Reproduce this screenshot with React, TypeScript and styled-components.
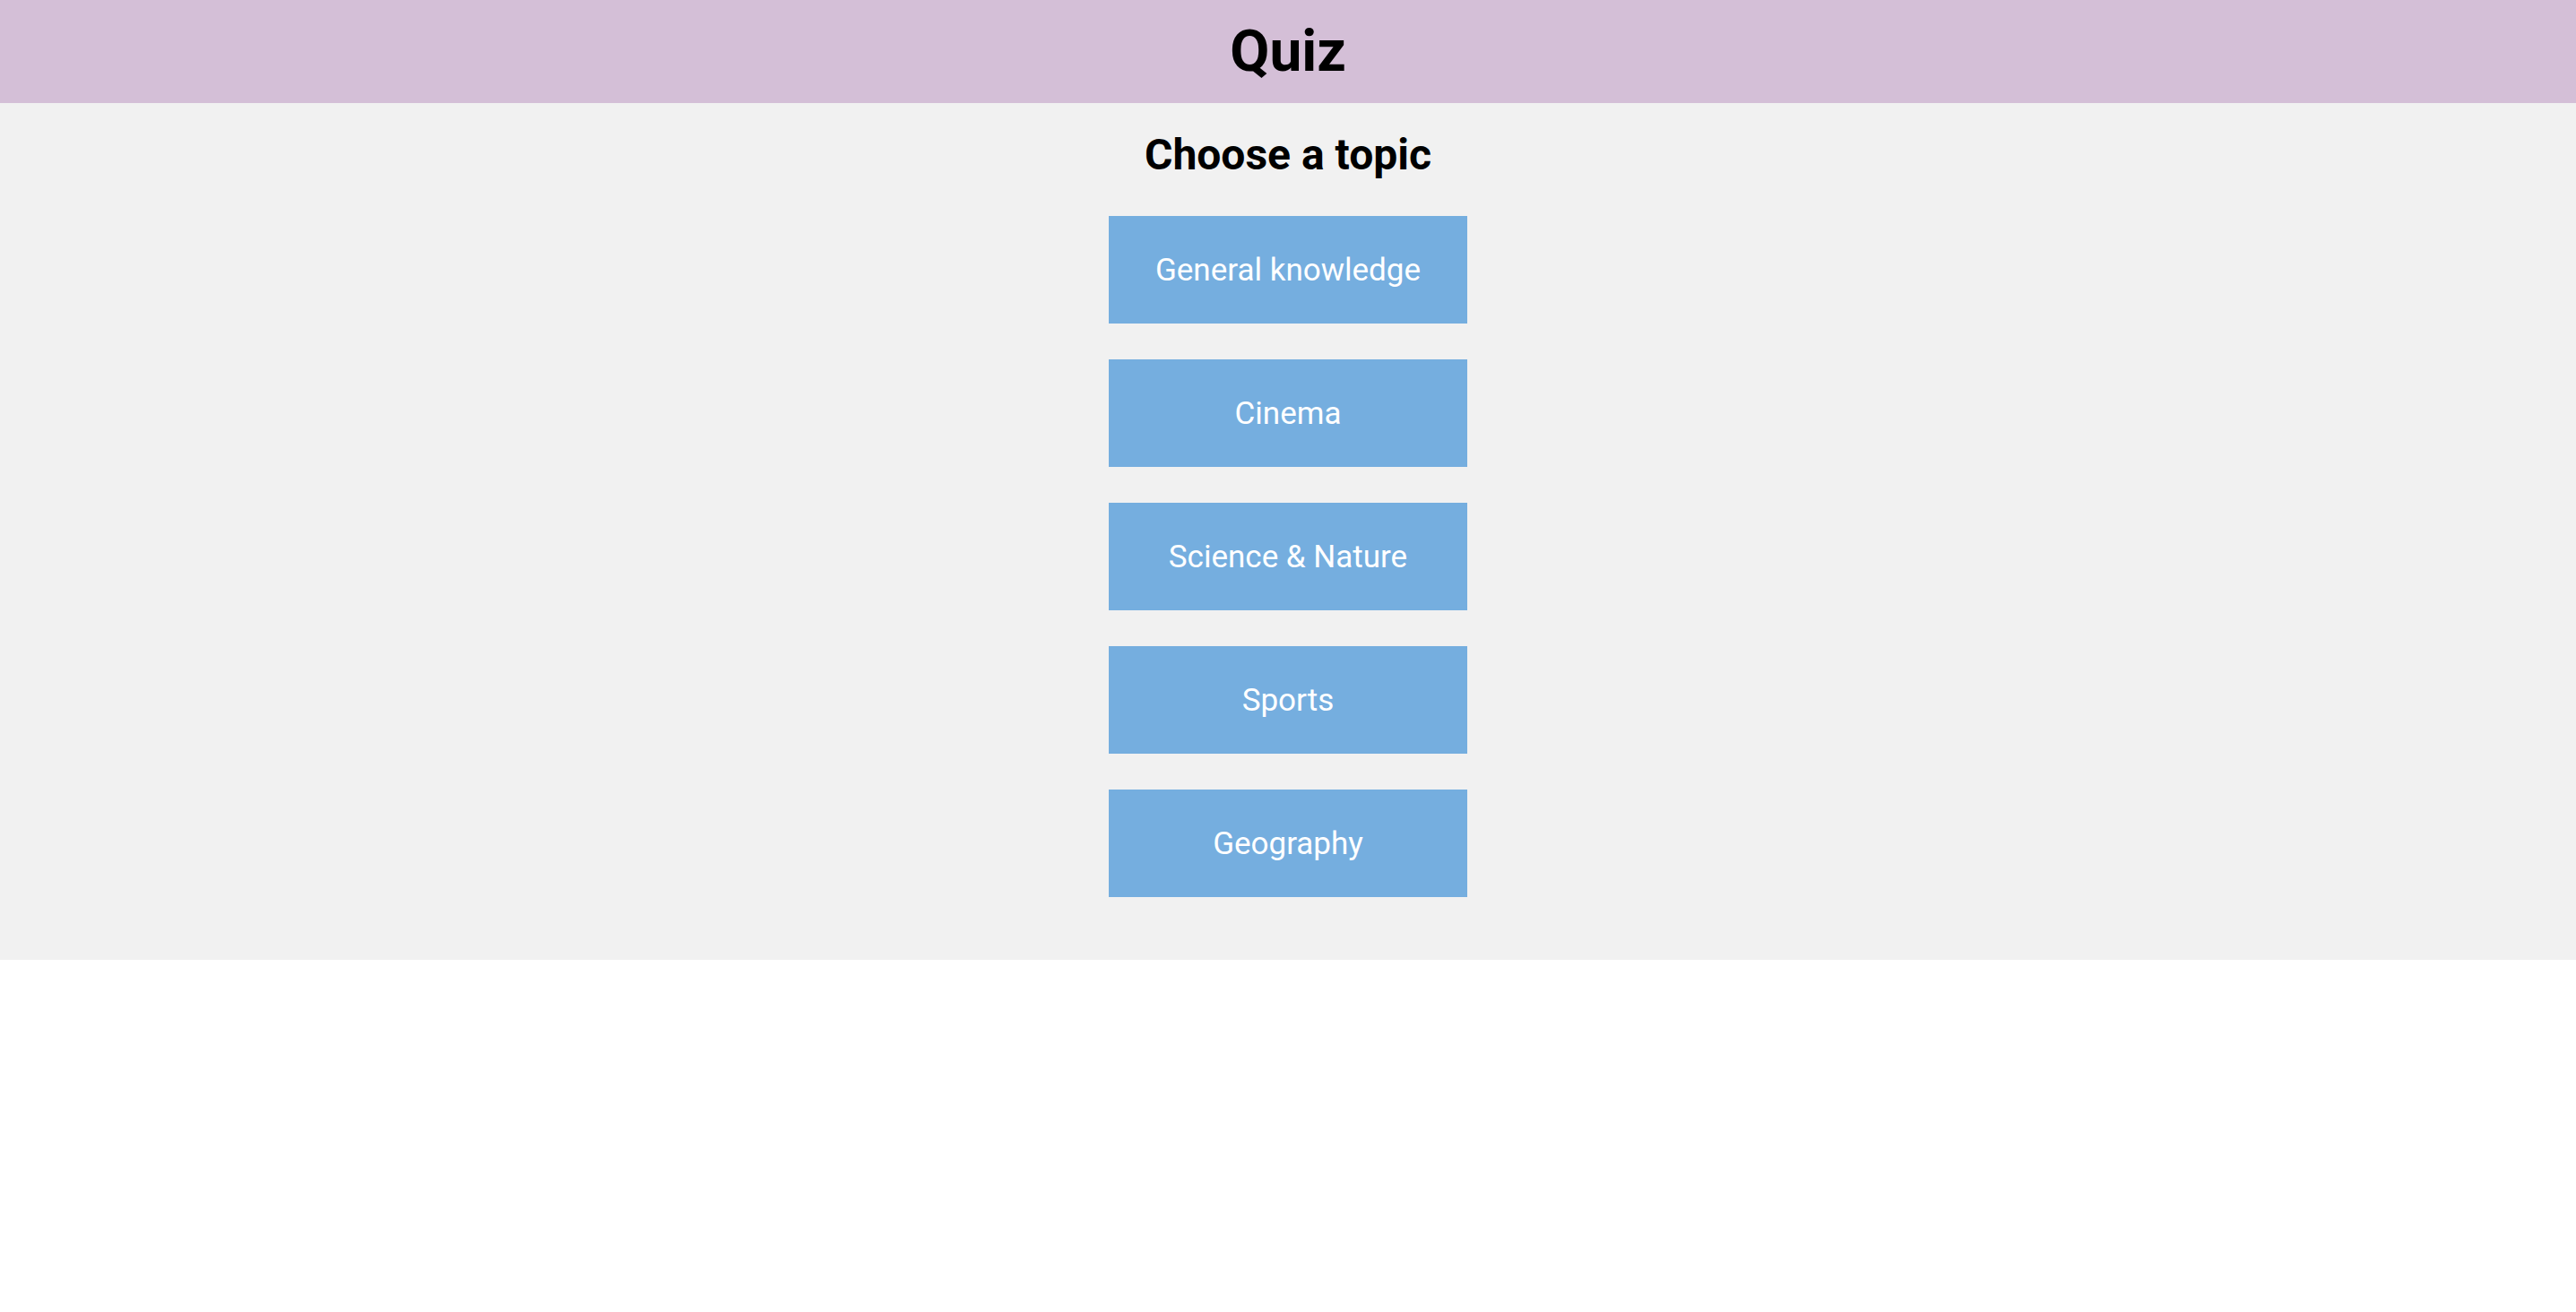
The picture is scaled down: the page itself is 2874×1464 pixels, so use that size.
import styled, { createGlobalStyle } from 'styled-components'

const TOPICS = ['General knowledge', 'Cinema', 'Science & Nature', 'Sports', 'Geography']

const GlobalStyle = createGlobalStyle`
  html, body {
    margin: 0;
    padding: 0;
    background: #ffffff;
    font-family: Roboto, "Liberation Sans", sans-serif;
  }
`

export default function App() {
  return (
    <>
      <GlobalStyle />
      <Header>
        <Title>Quiz</Title>
      </Header>
      <Main>
        <Subtitle>Choose a topic</Subtitle>
        <TopicList>
          {TOPICS.map((topic) => (
            <TopicButton key={topic} type="button">
              {topic}
            </TopicButton>
          ))}
        </TopicList>
      </Main>
    </>
  )
}

const Header = styled.header`
  height: 115px;
  display: flex;
  align-items: center;
  justify-content: center;
  background-color: #d4bfd7;
`

const Title = styled.h1`
  margin: 0;
  font-size: 64px;
  font-weight: 700;
  color: #000000;
`

const Main = styled.main`
  display: flex;
  flex-direction: column;
  align-items: center;
  padding: 30px 0 70px;
  background-color: #f1f1f1;
`

const Subtitle = styled.h2`
  margin: 0 0 40px;
  font-size: 48px;
  line-height: 56px;
  font-weight: 700;
  color: #000000;
`

const TopicList = styled.div`
  display: flex;
  flex-direction: column;
  gap: 40px;
`

const TopicButton = styled.button`
  width: 400px;
  height: 120px;
  border: none;
  border-radius: 0;
  padding: 0;
  background-color: #75aedf;
  color: #ffffff;
  font-family: Roboto, "Liberation Sans", sans-serif;
  font-size: 35px;
  cursor: pointer;
`
